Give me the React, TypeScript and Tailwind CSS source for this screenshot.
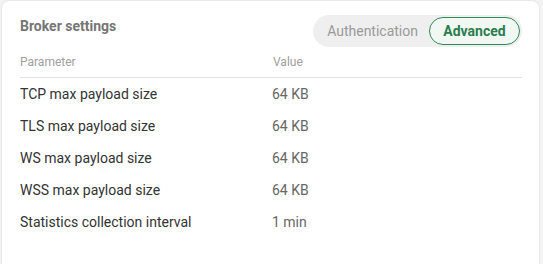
import { type ReactElement } from 'react';

interface SettingRow {
  label: string;
  value: string;
}

const rows: SettingRow[] = [
  { label: 'TCP max payload size', value: '64 KB' },
  { label: 'TLS max payload size', value: '64 KB' },
  { label: 'WS max payload size', value: '64 KB' },
  { label: 'WSS max payload size', value: '64 KB' },
  { label: 'Statistics collection interval', value: '1 min' },
];

/**
 * Segmented toggle between settings views
 */
const ViewToggle = (): ReactElement => {
  return (
    <div className="flex h-[32px] items-center rounded-full bg-[#efefef] p-[2px] pl-[14px]">
      <button className="mr-[11px] text-[14px] leading-none text-[#9a9a9a]">Authentication</button>
      <button className="flex h-[28px] w-[91px] items-center justify-center rounded-full border border-[#2f8a57] bg-[#f1f8f3] text-[14px] font-bold leading-none text-[#2b7d4e]">
        Advanced
      </button>
    </div>
  );
};

export default function App(): ReactElement {
  return (
    <div
      className="flex h-[264px] w-[543px] bg-[#f3f3f3]"
      style={{ fontFamily: 'Roboto, "Liberation Sans", sans-serif' }}
    >
      <div className="ml-px h-full w-[539px] rounded-t-[8px] border border-b-0 border-[#e9e9e9] bg-white pl-[18px] pr-[17px]">
        <div className="flex items-start justify-between pt-[14px]">
          <h2 className="pt-[2px] text-[14px] font-bold leading-[18px] text-[#767676]">Broker settings</h2>
          <ViewToggle />
        </div>
        <div className="mt-[4px] flex h-[27px] items-start border-b border-[#e3e3e3] pt-[4px] text-[12px] leading-[14px] text-[#a0a0a0]">
          <span className="w-[253px]">Parameter</span>
          <span>Value</span>
        </div>
        <div>
          {rows.map((row) => (
            <div key={row.label} className="flex h-[32px] items-center text-[14px]">
              <span className="w-[252px] text-[#333333]">{row.label}</span>
              <span className="text-[#666666]">{row.value}</span>
            </div>
          ))}
        </div>
      </div>
    </div>
  );
}
